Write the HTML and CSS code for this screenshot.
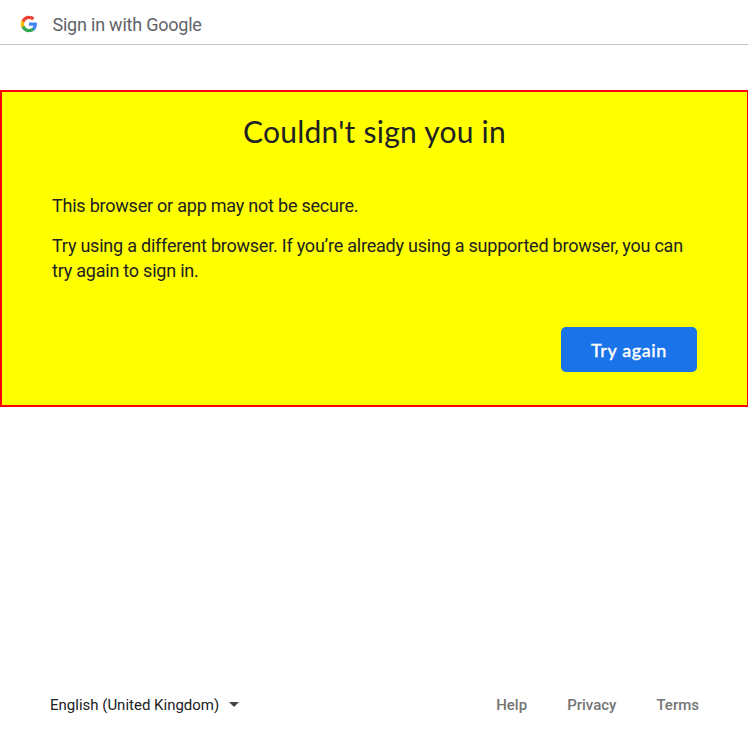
FILE: index.html
```html
<!DOCTYPE html>
<html lang="en-GB">
<head>
<meta charset="utf-8">
<title>Sign in with Google</title>
<link rel="stylesheet" href="styles.css">
</head>
<body>
<header class="top">
  <svg class="logo" viewBox="0 0 48 48" aria-hidden="true">
    <path fill="#4285F4" d="M45.12 24.5c0-1.56-.14-3.06-.4-4.5H24v8.51h11.84c-.51 2.75-2.06 5.08-4.39 6.64v5.52h7.11c4.16-3.83 6.56-9.47 6.56-16.17z"/>
    <path fill="#34A853" d="M24 46c5.94 0 10.92-1.97 14.56-5.33l-7.11-5.52c-1.97 1.32-4.49 2.1-7.45 2.1-5.73 0-10.58-3.87-12.31-9.07H4.34v5.7C7.96 41.07 15.4 46 24 46z"/>
    <path fill="#FBBC05" d="M11.69 28.18C11.25 26.86 11 25.45 11 24s.25-2.86.69-4.18v-5.7H4.34C2.85 17.09 2 20.45 2 24s.85 6.91 2.34 9.88l7.35-5.7z"/>
    <path fill="#EA4335" d="M24 10.75c3.23 0 6.13 1.11 8.41 3.29l6.31-6.31C34.91 4.18 29.93 2 24 2 15.4 2 7.96 6.93 4.34 14.12l7.35 5.7c1.73-5.2 6.58-9.07 12.31-9.07z"/>
  </svg>
  <span class="top-text">Sign in with Google</span>
</header>
<main class="panel">
  <h1>Couldn't sign you in</h1>
  <p>This browser or app may not be secure.</p>
  <p>Try using a different browser. If you’re already using a supported browser, you can try again to sign in.</p>
  <button class="retry">Try again</button>
</main>
<footer>
  <div class="lang"><span>English (United Kingdom)</span><i class="caret"></i></div>
  <nav><a>Help</a><a>Privacy</a><a>Terms</a></nav>
</footer>
</body>
</html>
```

FILE: styles.css
```css
* { box-sizing: border-box; }
body {
  margin: 0;
  height: 750px;
  display: flex;
  flex-direction: column;
  background: #fff;
  color: #202124;
  font-family: Roboto, sans-serif;
}
.top {
  height: 45px;
  padding: 4px 20px 0;
  border-bottom: 1px solid #c4c4c4;
  display: flex;
  align-items: center;
  color: #5f6368;
  font-size: 18px;
  letter-spacing: -0.22px;
}
.logo { width: 18px; height: 18px; margin: 0 14.5px 0 0; }
.top-text { line-height: 24px; padding-top: 2px; }
.panel {
  margin-top: 45px;
  height: 317px;
  padding: 19px 50px 0 50px;
  border: 2px solid #f00;
  border-right-width: 1px;
  background: #ff0;
  display: flex;
  flex-direction: column;
  font-size: 18px;
  line-height: 25px;
  letter-spacing: -0.225px;
}
h1 {
  margin: 0 0 42px;
  font: 400 30px/40px Lato, sans-serif;
  letter-spacing: 0.24px;
  text-align: center;
}
p { margin: 0 0 15px; }
.retry {
  align-self: flex-end;
  margin-top: 29px;
  width: 136px;
  height: 45px;
  border: 0;
  border-radius: 5px;
  background: #1a73e8;
  color: #fff;
  font: 500 18px/24px Lato, sans-serif;
  letter-spacing: 0.6px;
  -webkit-text-stroke: 0.3px #fff;
}
footer {
  margin-top: auto;
  height: 90px;
  padding: 0 49px 0 50px;
  display: flex;
  justify-content: space-between;
  align-items: center;
  font-size: 15px;
}
.lang { display: flex; align-items: center; gap: 10px; }
.caret {
  margin-top: -1px;
  border: 5px solid transparent;
  border-top-color: #444;
  border-bottom: 0;
}
nav { display: flex; gap: 40px; color: #757575; font-weight: 500; }
```
